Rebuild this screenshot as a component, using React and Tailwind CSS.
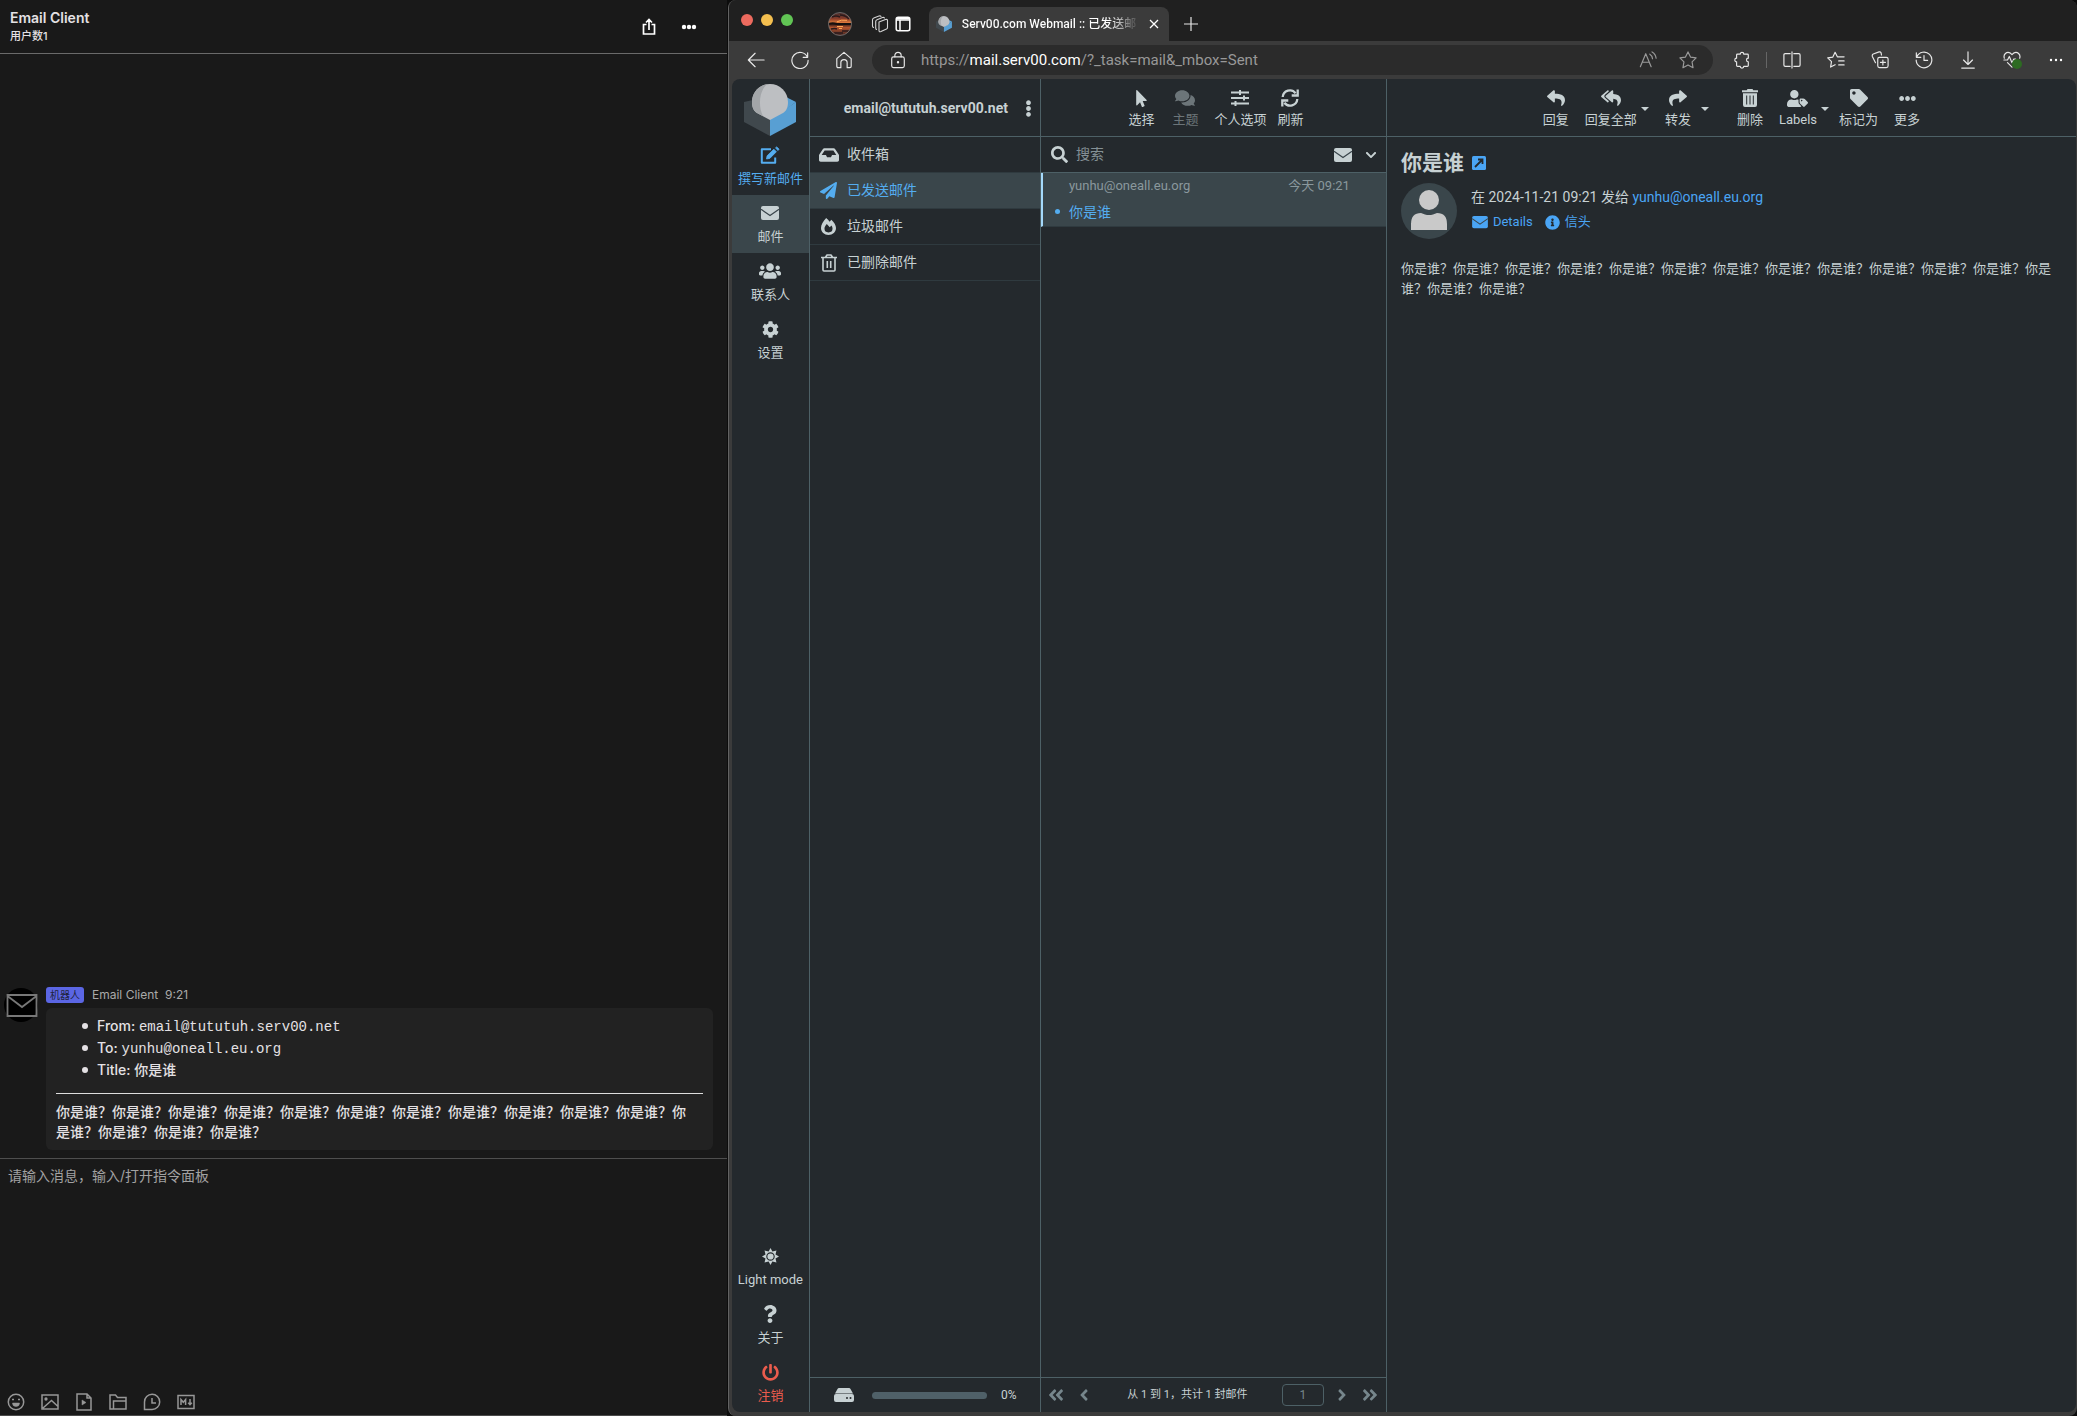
import {
  FaReply, FaReplyAll, FaShare, FaTag, FaEllipsisH, FaUsers, FaCog, FaSearch, FaQuestion, FaPowerOff,
  FaMousePointer, FaComments, FaInbox, FaPaperPlane, FaChevronDown, FaInfoCircle, FaEllipsisV,
  FaAngleLeft, FaAngleRight, FaAngleDoubleLeft, FaAngleDoubleRight, FaUserTag,
} from "react-icons/fa";

const TEXT = "你是谁？";

const Stroke = ({ children, className = "size-5", width = 1.3 }) => (
  <svg viewBox="0 0 20 20" className={`${className} shrink-0`} fill="none" stroke="currentColor" strokeWidth={width} strokeLinecap="round" strokeLinejoin="round">
    {children}
  </svg>
);

const Envelope = ({ className }) => (
  <svg viewBox="0 0 20 16" className={className}>
    <rect x="1" y="1" width="18" height="14" rx="2" fill="currentColor" />
    <path d="M1 4.2l9 6.3 9-6.3" fill="none" stroke="#3a454b" strokeWidth="1.2" />
  </svg>
);

const Edit = () => (
  <svg viewBox="0 0 20 18" className="h-[18px] w-5" fill="none" stroke="currentColor" strokeWidth="2" strokeLinejoin="round">
    <path d="M11 3.200H1.800V16.800h13.400V11.500" />
    <path d="M6.500 13l.6-3.200 6.700-6.600 2.600 2.600-6.600 6.600zM15.500 1.800l1.200-.9 2.400 2.300-1.200 1.300z" fill="currentColor" strokeWidth="0.8" />
  </svg>
);

const Sliders = ({ className }) => (
  <svg viewBox="0 0 18 16" className={className} stroke="currentColor" strokeWidth="1.8">
    <path d="M0 2.5h18M0 8h18M0 13.5h18" />
    <path d="M9 0v5M13 5.5v5M4.500 11v5" strokeWidth="2" />
  </svg>
);

const Refresh = ({ className }) => (
  <svg viewBox="0 0 18 18" className={className} fill="none" stroke="currentColor" strokeWidth="2.3">
    <path d="M1.700 8A7.200 7.200 0 0 1 14.600 4.200M16.300 10A7.200 7.200 0 0 1 3.400 13.800" />
    <path d="M16.700 0.500v6h-6M1.300 17.500v-6h6" />
  </svg>
);

const Trash = ({ className }) => (
  <svg viewBox="0 0 16 18" className={className}>
    <path fill="currentColor" d="M5.500 0h5l.8 1.200H16v2H0v-2h4.700zM1 4.200h14V16q0 2-2 2H3q-2 0-2-2z" />
    <path d="M4.700 6.500v9M8 6.500v9M11.300 6.500v9" stroke="#24292d" strokeWidth="1" />
  </svg>
);

const TrashOutline = ({ className }) => (
  <svg viewBox="0 0 16 18" className={className} fill="none" stroke="currentColor" strokeWidth="1.6" strokeLinejoin="round">
    <path d="M0 3.500h16M4.500 3.300L6 1h4l1.500 2.300M2 3.500V16q0 1 1 1h10q1 0 1-1V3.500M6.300 7v7M9.700 7v7" />
  </svg>
);

const Fire = ({ className }) => (
  <svg viewBox="0 0 16 18" className={className} fill="currentColor">
    <path fillRule="evenodd" d="M5.500 0C7 1.200 8.200 2.400 9.200 3.800L11 1.800C14 4.600 16 7.700 16 10.600 16 15 12.400 18 8 18S0 15 0 10.600C0 7.200 2.300 3.400 5.500 0zM6.200 6.400C4.500 8.200 3.700 9.800 3.700 11.200a4.300 4.100 0 0 0 8.600 0c0-1.200-.4-2.200-1.100-3.200L9.300 9.900z" />
  </svg>
);

const Sun = ({ className }) => (
  <svg viewBox="0 0 18 18" className={className}>
    <path fill="currentColor" d="M9 0l2 3.600 4.300-1-1 4.300L18 9l-3.700 2.100 1 4.300-4.300-1L9 18l-2-3.600-4.300 1 1-4.300L0 9l3.700-2.100-1-4.300 4.300 1z" />
    <circle cx="9" cy="9" r="3.900" fill="none" stroke="#24292d" strokeWidth="1.200" />
  </svg>
);

const Drive = ({ className }) => (
  <svg viewBox="0 0 20 14" className={className}>
    <path fill="currentColor" d="M5 0h10q1 0 1.500 1L19 5.500H1L3.500 1Q4 0 5 0zM0 8q0-2 2-2h16q2 0 2 2v4q0 2-2 2H2q-2 0-2-2z" />
    <circle cx="13" cy="10" r="1" fill="#24292d" />
    <circle cx="16.500" cy="10" r="1" fill="#24292d" />
  </svg>
);

const Logo = ({ className }) => (
  <svg viewBox="0 0 52 52" className={className}>
    <path fill="#40484d" d="M0 18l26-6v40L0 38z" />
    <path fill="#589fd3" d="M52 18l-26 17v17l26-14z" />
    <path fill="#589fd3" d="M40 12l12 6-12 9z" />
    <path fill="#bdbfc2" d="M26 0a18 18 0 0 1 18 18c0 6-2 9-5 11l-13 7-13-7c-3-2-5-5-5-11A18 18 0 0 1 26 0z" />
    <path fill="#a3a6a9" d="M23 .3C14 1.500 8 9 8 18c0 6 2 9 5 11l6 3.200C14 22 15 7 23 .3z" />
  </svg>
);

const SunsetAvatar = () => (
  <svg viewBox="0 0 24 24" className="size-6">
    <defs>
      <clipPath id="round"><circle cx="12" cy="12" r="11.500" /></clipPath>
      <linearGradient id="sky" x1="0" x2="0" y1="0" y2="1">
        <stop offset="0" stopColor="#3c2a2c" />
        <stop offset=".28" stopColor="#8a3d2a" />
        <stop offset=".45" stopColor="#e07a3c" />
        <stop offset=".5" stopColor="#2a1514" />
        <stop offset=".65" stopColor="#b4552f" />
        <stop offset="1" stopColor="#3a2020" />
      </linearGradient>
    </defs>
    <g clipPath="url(#round)">
      <path fill="url(#sky)" d="M0 0h24v24H0z" />
      <path d="M4 5q4-2 8 0M12 3q5 0 9 4M3 17q4-1 6 0M14 19h7M6 21h9" stroke="#2a1a1c" strokeWidth="1.500" fill="none" />
      <path d="M0 12q5-1.500 9 0h15" stroke="#16100f" strokeWidth="2" fill="none" />
      <path d="M9 9.800q4-2.500 10-1.500M9 14.500h6M11 16.500h3" stroke="#ffa552" fill="none" />
    </g>
    <circle cx="12" cy="12" r="11.500" fill="none" stroke="#777" strokeWidth=".8" />
  </svg>
);

/* ---------- chat window ---------- */

const ChatTool = ({ label, children }) => (
  <button type="button" aria-label={label} className="text-[#979797]">
    <svg viewBox="0 0 18 18" className="size-[18px]" fill="none" stroke="currentColor" strokeWidth="1.5">{children}</svg>
  </button>
);

const InfoLine = ({ children }) => (
  <li className="flex items-center gap-[9px]">
    <span className="size-[6px] rounded-full bg-[#e4e1e4]" />
    <span>{children}</span>
  </li>
);

const Chat = () => (
  <section className="flex w-[35%] shrink-0 flex-col border-b border-[#4a4a4a] bg-[#191919] font-[Inter,'Noto_Sans_CJK_SC',sans-serif] text-[#e4e1e4]">
    <header className="flex h-[54px] items-center border-b border-[#6a6a6a] pr-[30px] pl-[10px]">
      <div className="flex-1">
        <h1 className="text-[14px] leading-[18px] font-semibold">Email Client</h1>
        <p className="text-[11px] leading-[18px] font-medium">用户数1</p>
      </div>
      <button type="button" aria-label="分享" className="mr-6 text-white">
        <svg viewBox="0 0 16 18" className="h-[18px] w-4" fill="none" stroke="currentColor" strokeWidth="1.7">
          <path d="M5.500 6.500H2.500V16h11V6.500h-3M8 12V1.500M5 4.500l3-3 3 3" />
        </svg>
      </button>
      <button type="button" aria-label="更多" className="text-white">
        <svg viewBox="0 0 16 6" className="w-4" fill="currentColor">
          <circle cx="3" cy="3" r="2.200" /><circle cx="8" cy="3" r="2.200" /><circle cx="13" cy="3" r="2.200" />
        </svg>
      </button>
    </header>

    <main className="flex flex-1 flex-col justify-end pr-[14px] pb-2 pl-1">
      <article className="flex gap-2">
        <svg viewBox="0 0 34 34" className="mt-[2px] size-[34px] shrink-0">
          <circle cx="17" cy="17" r="17" fill="#000" />
          <path d="M3.500 7h29v21h-29zM3.500 8L18 19 32.500 8" fill="none" stroke="#777" strokeWidth="1.800" />
        </svg>
        <div className="flex-1">
          <div className="flex h-[22px] items-center gap-2 pb-1 text-[12px] text-[#a9a9a9]">
            <span className="rounded-[3px] bg-[#5b66e4] px-1 text-[10px] leading-4 text-[#20233c]">机器人</span>
            <span>Email Client&nbsp; 9:21</span>
          </div>
          <div className="rounded-md bg-[#222222] px-[10px] pt-[7px] pb-2 text-[14px] font-medium">
            <ul className="pl-[26px] leading-[22px]">
              <InfoLine>From: <code className="font-['Liberation_Mono',monospace] text-[14px] leading-none">email@tututuh.serv00.net</code></InfoLine>
              <InfoLine>To: <code className="font-['Liberation_Mono',monospace] text-[14px] leading-none">yunhu@oneall.eu.org</code></InfoLine>
              <InfoLine>Title: 你是谁</InfoLine>
            </ul>
            <hr className="mt-3 mb-2 border-[#dddddd]" />
            <p className="pr-3 leading-5">{TEXT.repeat(15)}</p>
          </div>
        </div>
      </article>
    </main>

    <footer className="flex h-[257px] flex-col border-t border-[#4e4e4e]">
      <textarea
        aria-label="消息"
        placeholder="请输入消息，输入/打开指令面板"
        className="w-full flex-1 resize-none bg-transparent px-2 py-[7px] text-[14px] leading-5 outline-none placeholder:text-[#a2a2a2]"
      />
      <div className="flex gap-4 px-[7px] pb-1">
        <ChatTool label="表情">
          <circle cx="9" cy="9" r="7.700" />
          <path d="M5.500 10h7a3.500 3.500 0 0 1-7 0z" fill="currentColor" strokeWidth=".5" />
          <path d="M5 6.500h2M11 6.500h2" />
        </ChatTool>
        <ChatTool label="图片">
          <path d="M1 2h16v14H1zM2 15l8.500-7.500L17 13.500" /><circle cx="5" cy="6" r=".9" fill="currentColor" />
        </ChatTool>
        <ChatTool label="视频">
          <path d="M2 1h10l4 4v12H2zM12 1v4h4" /><path d="M7 7v5l4-2.500z" fill="currentColor" strokeWidth=".5" />
        </ChatTool>
        <ChatTool label="文件">
          <path d="M1 16V2h5.500l2 2.500H17V16zM4.500 16V8H17" />
        </ChatTool>
        <ChatTool label="历史">
          <path d="M1.500 16.500V9A7.600 7.600 0 1 1 9 16.500zM9 5v5h4" />
        </ChatTool>
        <ChatTool label="Markdown">
          <path d="M1 2.500h16v13H1zM4 12V6.500l2.300 2.800 2.300-2.800V12M13 6v5M11.200 9.700l1.800 2 1.800-2" />
        </ChatTool>
      </div>
    </footer>
  </section>
);

/* ---------- browser chrome ---------- */

const TabStrip = () => (
  <div className="flex h-[41px] items-end bg-[#202020] pl-3">
    <div className="flex h-full items-center gap-2">
      <span className="mb-[1px] size-3 rounded-full bg-[#ec6a5e]" />
      <span className="mb-[1px] size-3 rounded-full bg-[#f4bf4f]" />
      <span className="mb-[1px] size-3 rounded-full bg-[#61c554]" />
    </div>
    <div className="ml-[35px] flex h-full items-center pt-[6px]">
      <SunsetAvatar />
      <button type="button" aria-label="工作区" className="ml-[19px] text-[#d5d5d5]">
        <svg viewBox="0 0 18 18" className="size-[18px]" fill="none" stroke="currentColor" strokeWidth="1.1" strokeLinejoin="round" strokeLinecap="round">
          <path d="M8 7l6.500-2.500q2-.5 2 1v7q0 1-1 1.500L10 16.500q-2 .8-2-1zM5.500 14.500q-.8-.5-.8-1.500V6.500q0-1.300 1.300-1.800L11.500 2.500q1.300-.4 2 .5M2.500 12.500Q1.500 12 1.500 11V4.800Q1.500 3.500 2.800 3L8 1q1.300-.4 2 .3" />
        </svg>
      </button>
      <button type="button" aria-label="标签页操作" className="ml-[6px] text-white">
        <svg viewBox="0 0 16 16" className="size-4" fill="none" stroke="currentColor" strokeWidth="1.500">
          <rect x="1.200" y="1.200" width="13.600" height="13.600" rx="2" /><path d="M1 4h14M5 4v11" /><path d="M2 2.500h12" strokeWidth="2" />
        </svg>
      </button>
    </div>
    <div className="ml-[18px] flex h-[34px] w-[240px] items-center rounded-t-lg bg-[#3b3b3b] pr-[10px] pl-[7px] text-white">
      <Logo className="size-4" />
      <span className="ml-[10px] w-[180px] bg-linear-to-r from-white from-82% to-[#3b3b3b] bg-clip-text text-[12px] font-medium whitespace-nowrap text-transparent">
        Serv00.com Webmail :: 已发送邮
      </span>
      <button type="button" aria-label="关闭标签页" className="ml-2">
        <svg viewBox="0 0 10 10" className="size-[10px]" stroke="currentColor" strokeWidth="1.300"><path d="M1 1l8 8M9 1l-8 8" /></svg>
      </button>
    </div>
    <button type="button" aria-label="新建标签页" className="mb-[10px] ml-[15px]">
      <svg viewBox="0 0 14 14" className="size-[14px]" stroke="#e6e6e6" strokeWidth="1.200"><path d="M7 0v14M0 7h14" /></svg>
    </button>
  </div>
);

const BarButton = ({ label, children, className = "text-[#e8e8e8]" }) => (
  <button type="button" aria-label={label} className={className}>
    <Stroke className="size-[18px]">{children}</Stroke>
  </button>
);

const AddressBar = () => (
  <div className="flex h-[38px] items-center bg-[#3b3b3b] pr-3 pl-[18px]">
    <div className="flex gap-[26px]">
      <BarButton label="后退"><path d="M19 10H1.500M9 2.500L1.500 10 9 17.500" /></BarButton>
      <BarButton label="刷新"><path d="M18.500 2v5h-5M18.300 7A9 9 0 1 0 19 10.500" /></BarButton>
      <BarButton label="主页"><path d="M2 8.500L10 1.500l8 7V17q0 1.500-1.500 1.500h-3V13a2.500 2.500 0 0 0-7 0v5.500h-3Q2 18.500 2 17z" /></BarButton>
    </div>
    <div className="ml-[19px] flex h-[30px] flex-1 items-center rounded-full bg-[#2b2b2b] pr-4 pl-[17px]">
      <BarButton label="站点信息">
        <rect x="3" y="6.500" width="14" height="12" rx="2" /><path d="M6.500 6.500V5a3.500 3.500 0 0 1 7 0v1.500" /><circle cx="10" cy="12.500" r=".7" fill="currentColor" />
      </BarButton>
      <a href="#sent" className="ml-[14px] flex-1 text-[15px] text-[#989898]">
        https://<span className="text-white">mail.serv00.com</span>/?_task=mail&amp;_mbox=Sent
      </a>
      <div className="flex gap-[22px]">
        <BarButton label="大声朗读" className="text-[#9a9a9a]"><path d="M1.500 17.500L7.500 3l6 14.500M3.500 12.500h8M12 3.500a6 6 0 0 1 3 5M14.500 1a9 9 0 0 1 4.500 7" /></BarButton>
        <BarButton label="收藏此页" className="text-[#9a9a9a]"><path d="M10 1l2.800 5.800 6.200.9-4.500 4.400 1.100 6.400L10 15.500l-5.600 3 1.100-6.400L1 7.700l6.200-.9z" /></BarButton>
      </div>
    </div>
    <div className="ml-5 flex items-center">
      <BarButton label="扩展"><path d="M5 3.500h3a2 2 0 0 1 4 0h4q1 0 1 1v3.500a2 2 0 1 0 0 4v4q0 1-1 1h-4a2 2 0 0 1-4 0H5q-1 0-1-1v-4a2 2 0 0 1 0-4V4.500q0-1 1-1z" /></BarButton>
      <span className="mr-4 ml-[15px] h-4 w-px bg-[#666666]" />
      <div className="flex items-center gap-[26px]">
        <BarButton label="分屏"><path d="M8 3H2.500Q1 3 1 4.500v11Q1 17 2.500 17H8M12 3h5.500Q19 3 19 4.500v11q0 1.500-1.500 1.500H12M10 1v18" /></BarButton>
        <BarButton label="收藏夹"><path d="M12.500 6.500h-1L9 1.500 6.500 6.800.8 7.700l4.200 4.200-1 6L9 15.200M12.500 6.500H19M13 11h6M13 15.500h6" /></BarButton>
        <BarButton label="集锦"><rect x="7.500" y="7" width="11.500" height="11.500" rx="2" /><path d="M13.200 10v5.500M10.500 12.700H16M5 13L1.500 6Q1 4 2.500 3.300L9 1q1.500-.4 2.200 1l.5 2.500" /></BarButton>
        <BarButton label="历史记录"><path d="M1.500 2v5h5M2 6.500A8.700 8.700 0 1 1 1.300 10M10 5v5.500h4" /></BarButton>
        <BarButton label="下载"><path d="M10 1v13.500M5 10l5 5 5-5M3 19h14" /></BarButton>
        <button type="button" aria-label="浏览器概要" className="relative text-[#e8e8e8]">
          <Stroke className="size-[18px]"><path d="M10 18L5 13M1.500 8C0 4 4 0 8 2.200L10 4l2-1.800C16 0 20 4 18.500 8M1 10h4l2-4 3 7 2-4h2" /></Stroke>
          <span className="absolute top-2 left-[9px] size-[10px] rounded-full bg-[#2d6b22]" />
        </button>
        <button type="button" aria-label="设置及其他" className="text-white">
          <svg viewBox="0 0 18 4" className="w-[18px]" fill="currentColor"><circle cx="4" cy="2" r="1.200" /><circle cx="9" cy="2" r="1.200" /><circle cx="14" cy="2" r="1.200" /></svg>
        </button>
      </div>
    </div>
  </div>
);

/* ---------- webmail ---------- */

const TaskButton = ({ icon, label, className = "" }) => (
  <button type="button" className={`flex h-[58px] w-full flex-col items-center text-[13px] leading-5 whitespace-nowrap ${className}`}>
    <span className="flex h-9 items-center">{icon}</span>
    <span className="-mt-1">{label}</span>
  </button>
);

const TaskMenu = () => (
  <nav className="flex w-[78px] shrink-0 flex-col border-r border-[#4d6066]">
    <div className="flex h-[58px] justify-center pt-[5px]">
      <Logo className="size-[52px]" />
    </div>
    <TaskButton icon={<Edit />} label="撰写新邮件" className="text-[#54adf0]" />
    <TaskButton icon={<Envelope className="h-4 w-5" />} label="邮件" className="bg-[#3a464b]" />
    <TaskButton icon={<FaUsers className="size-[22px]" />} label="联系人" />
    <TaskButton icon={<FaCog className="size-[17px]" />} label="设置" />
    <div className="flex-1" />
    <TaskButton icon={<Sun className="size-[17px]" />} label="Light mode" />
    <TaskButton icon={<FaQuestion className="size-[18px]" />} label="关于" />
    <TaskButton icon={<FaPowerOff className="size-[17px]" />} label="注销" className="text-[#ea5c4d]" />
  </nav>
);

const folders = [
  { name: "收件箱", icon: <FaInbox className="size-5" /> },
  { name: "已发送邮件", icon: <FaPaperPlane className="size-[17px]" />, selected: true },
  { name: "垃圾邮件", icon: <Fire className="h-[17px] w-[15px]" /> },
  { name: "已删除邮件", icon: <TrashOutline className="h-[18px] w-4" /> },
];

const Folders = () => (
  <section className="flex w-[231px] shrink-0 flex-col border-r border-[#4d6066]">
    <header className="flex h-[58px] items-center justify-end border-b border-[#4d6066] pt-[2px] pr-[3px]">
      <h2 className="text-[14px] font-bold">email@tututuh.serv00.net</h2>
      <button type="button" aria-label="菜单" className="ml-3"><FaEllipsisV className="size-[17px]" /></button>
    </header>
    <ul className="flex-1">
      {folders.map((f) => (
        <li key={f.name} className={f.selected ? "border-b border-[#2f3a3f] bg-[#3a464b] text-[#54adf0]" : "border-b border-[#2f3a3f]"}>
          <a href="#folder" className="flex h-[35px] items-center pl-[9px] text-[14px]">
            <span className="mr-2 flex w-5 justify-center">{f.icon}</span>
            {f.name}
          </a>
        </li>
      ))}
    </ul>
    <footer className="flex h-[35px] items-center border-t border-[#4d6066] pl-6 text-[12px]">
      <Drive className="h-[14px] w-5" />
      <span className="mr-[14px] ml-[18px] h-[7px] w-[115px] rounded-full bg-[#4f6068]" />
      0%
    </footer>
  </section>
);

const Tool = ({ icon, label, className = "px-2" }) => (
  <button type="button" className={`flex flex-col items-center text-[13px] leading-5 whitespace-nowrap ${className}`}>
    <span className="mb-px flex h-[22px] items-center">{icon}</span>
    {label}
  </button>
);

const MessageList = () => (
  <section className="flex w-[346px] shrink-0 flex-col border-r border-[#4d6066]">
    <header className="flex h-[58px] items-start justify-center border-b border-[#4d6066] pt-2">
      <Tool icon={<FaMousePointer className="size-[17px]" />} label="选择" className="px-[9px]" />
      <Tool icon={<FaComments className="size-5" />} label="主题" className="px-[9px] text-[#6c7579]" />
      <Tool icon={<Sliders className="h-4 w-[18px]" />} label="个人选项" className="px-[7px]" />
      <Tool icon={<Refresh className="size-[18px]" />} label="刷新" className="px-1" />
    </header>
    <div className="flex h-9 items-center border-b border-[#4d6066] pr-[9px] pl-[10px]">
      <FaSearch className="size-[17px]" />
      <input type="text" aria-label="搜索" placeholder="搜索" className="ml-2 min-w-0 flex-1 bg-transparent text-[14px] outline-none placeholder:text-[#849196]" />
      <button type="button" aria-label="未读"><Envelope className="h-4 w-5" /></button>
      <button type="button" aria-label="筛选" className="ml-3"><FaChevronDown className="size-3" /></button>
    </div>
    <div className="flex-1">
      <a href="#message" className="block h-[54px] border-b border-l-2 border-b-[#2f3a3f] border-l-[#a5dafc] bg-[#3a464b] pr-9 pl-[26px]">
        <span className="flex justify-between pt-[3px] text-[13px] leading-5 text-[#8a989d]">
          <span>yunhu@oneall.eu.org</span>
          <span>今天 09:21</span>
        </span>
        <span className="relative mt-1 block text-[14px] leading-6 text-[#54adf0]">
          <span className="absolute top-[9px] -left-[14px] size-[5px] rounded-full bg-[#54adf0]" />
          你是谁
        </span>
      </a>
    </div>
    <footer className="flex h-[35px] items-center border-t border-[#4d6066] pr-[7px] pl-[6px] text-[12px]">
      <button type="button" aria-label="首页" className="text-[#76868c]"><FaAngleDoubleLeft className="size-[18px]" /></button>
      <button type="button" aria-label="上一页" className="ml-[10px] text-[#76868c]"><FaAngleLeft className="size-[18px]" /></button>
      <span className="flex-1 text-center text-[11px] whitespace-nowrap">从 1 到 1，共计 1 封邮件</span>
      <input type="text" aria-label="页码" defaultValue="1" className="h-[22px] w-[42px] rounded border border-[#4d6066] bg-transparent text-center text-[#76868c]" />
      <button type="button" aria-label="下一页" className="ml-[9px] text-[#76868c]"><FaAngleRight className="size-[18px]" /></button>
      <button type="button" aria-label="末页" className="ml-[10px] text-[#76868c]"><FaAngleDoubleRight className="size-[18px]" /></button>
    </footer>
  </section>
);

const Caret = ({ label }) => (
  <button type="button" aria-label={label} className="mt-[18px] h-2">
    <svg viewBox="0 0 8 4" className="w-2" fill="currentColor"><path d="M0 0h8L4 4z" /></svg>
  </button>
);

const Message = () => (
  <section className="flex min-w-0 flex-1 flex-col">
    <header className="flex h-[58px] items-start justify-center border-b border-[#4d6066] pt-2">
      <Tool icon={<FaReply className="size-[18px]" />} label="回复" />
      <Tool icon={<FaReplyAll className="size-5" />} label="回复全部" className="pr-1 pl-2" />
      <Caret label="回复选项" />
      <Tool icon={<FaShare className="size-[18px]" />} label="转发" className="pr-[10px] pl-4" />
      <Caret label="转发选项" />
      <Tool icon={<Trash className="h-[18px] w-4" />} label="删除" className="pr-2 pl-7" />
      <Tool icon={<FaUserTag className="size-[21px]" />} label="Labels" className="pr-1 pl-2" />
      <Caret label="标签选项" />
      <Tool icon={<FaTag className="size-[18px] rotate-0" />} label="标记为" className="pr-2 pl-[10px]" />
      <Tool icon={<FaEllipsisH className="size-[17px]" />} label="更多" />
    </header>
    <article className="px-[14px] pt-[11px]">
      <h2 className="flex items-center text-[21px] leading-[30px] font-bold">
        你是谁
        <a href="#open" aria-label="在新窗口中打开" className="ml-2 text-[#4aa5f5]">
          <svg viewBox="0 0 14 14" className="size-[14px]"><rect width="14" height="14" rx="1.500" fill="currentColor" /><path d="M3 11l7-7M6 3.500h4.500V8" fill="none" stroke="#24292d" strokeWidth="1.800" /></svg>
        </a>
      </h2>
      <div className="mt-[5px] flex gap-[14px]">
        <svg viewBox="0 0 56 56" className="size-14 shrink-0">
          <circle cx="28" cy="28" r="28" fill="#3a464b" />
          <circle cx="28" cy="17" r="10" fill="#c9c9c9" />
          <path fill="#c9c9c9" d="M10 47v-6q0-11 10-11l4 1.500q4 1 8 0l4-1.500q10 0 10 11v6z" />
        </svg>
        <div>
          <p className="pt-1 text-[14px] leading-5">
            在 2024-11-21 09:21 发给 <a href="#contact" className="text-[#4aa5f5]">yunhu@oneall.eu.org</a>
          </p>
          <p className="mt-[5px] flex text-[13px] leading-5 text-[#4aa5f5]">
            <a href="#details" className="flex items-center"><Envelope className="mr-1 h-[14px] w-[18px]" />Details</a>
            <a href="#headers" className="ml-3 flex items-center"><FaInfoCircle className="mr-[5px] size-[15px]" />信头</a>
          </p>
        </div>
      </div>
      <p className="mt-5 text-[13px] leading-5">{TEXT.repeat(15)}</p>
    </article>
  </section>
);

const Browser = () => (
  <section className="ml-px flex min-w-0 flex-1 flex-col overflow-hidden rounded-lg border-l border-[#626262] bg-[#3b3b3b] font-[Roboto,'Noto_Sans_CJK_SC',sans-serif]">
    <TabStrip />
    <AddressBar />
    <div className="mr-[1px] mb-1 ml-[3px] flex flex-1 overflow-hidden rounded-lg bg-[#24292d] text-[#c7d1d3]">
      <TaskMenu />
      <Folders />
      <MessageList />
      <Message />
    </div>
  </section>
);

const App = () => (
  <div className="flex min-h-screen bg-[#0c0c0c]">
    <Chat />
    <Browser />
  </div>
);

export default App;
